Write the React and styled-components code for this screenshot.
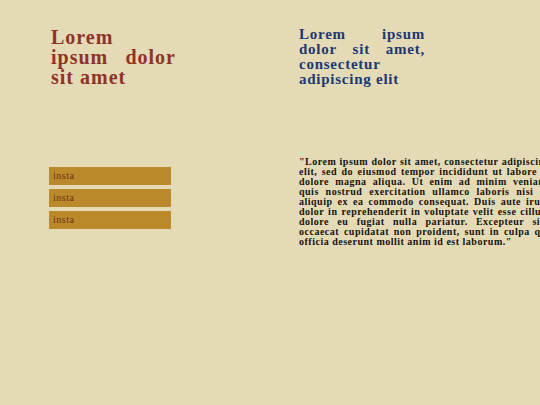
import React from "react";
import styled, { createGlobalStyle } from "styled-components";

const GlobalStyle = createGlobalStyle`
  *, *::before, *::after { box-sizing: border-box; }
  body {
    margin: 0;
    background: #e4dab6;
    font-family: "Liberation Serif", "Times New Roman", serif;
    overflow-x: hidden;
  }
  h1, h2, p, button { letter-spacing: 0.05em; }
`;

const Page = styled.main`
  display: grid;
  grid-template-columns: 250px 251px;
  grid-template-rows: minmax(130px, auto) auto;
  padding: 27px 0 0 49px;
  overflow: hidden;
`;

const Title = styled.h1`
  margin: 0 0 0 2px;
  max-width: 125px;
  color: #8f3428;
  font-size: 20px;
  line-height: 20px;
  text-align: justify;
`;

const Subtitle = styled.h2`
  margin: 0;
  max-width: 126px;
  color: #203870;
  font-size: 15px;
  line-height: 15px;
  text-align: justify;
`;

const Links = styled.nav`
  display: flex;
  flex-direction: column;
  gap: 4px;
  width: 122px;
  padding-top: 10px;
`;

const LinkButton = styled.button`
  height: 18px;
  padding: 0 4px;
  border: 0;
  background: #ba892a;
  color: #6b3214;
  font-family: inherit;
  font-size: 10px;
  line-height: 18px;
  text-align: left;
  cursor: pointer;
`;

const Body = styled.p`
  margin: 0;
  color: #17130c;
  font-size: 10px;
  line-height: 10px;
  font-weight: 700;
  text-align: justify;
`;

const links = ["insta", "insta", "insta"];

export default function App() {
  return (
    <>
      <GlobalStyle />
      <Page>
        <Title>Lorem ipsum dolor sit amet</Title>
        <Subtitle>Lorem ipsum dolor sit amet, consectetur adipiscing elit</Subtitle>
        <Links>
          {links.map((label, index) => (
            <LinkButton key={index} type="button">{label}</LinkButton>
          ))}
        </Links>
        <Body>
          "Lorem ipsum dolor sit amet, consectetur adipiscing elit, sed do
          eiusmod tempor incididunt ut labore et dolore magna aliqua. Ut enim ad
          minim veniam, quis nostrud exercitation ullamco laboris nisi ut
          aliquip ex ea commodo consequat. Duis aute irure dolor in
          reprehenderit in voluptate velit esse cillum dolore eu fugiat nulla
          pariatur. Excepteur sint occaecat cupidatat non proident, sunt in
          culpa qui officia deserunt mollit anim id est laborum."
        </Body>
      </Page>
    </>
  );
}
